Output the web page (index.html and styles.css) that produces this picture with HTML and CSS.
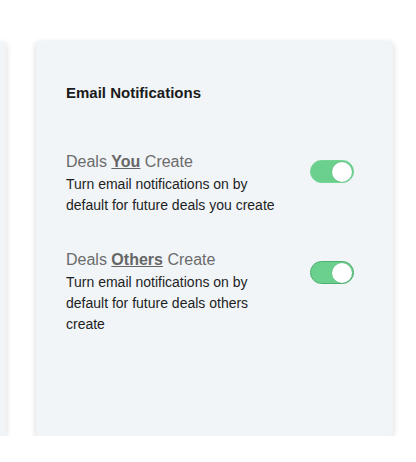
FILE: index.html
```html
<!DOCTYPE html>
<html>
<head>
<meta charset="utf-8">
<link rel="stylesheet" href="styles.css">
</head>
<body>
<div class="page">
  <div class="card card-side"></div>
  <div class="card card-main">
    <h2 class="heading">Email Notifications</h2>
    <div class="setting">
      <div class="setting-text">
        <div class="setting-title">Deals <span class="em">You</span> Create</div>
        <div class="setting-desc">Turn email notifications on by default for future deals you create</div>
      </div>
      <div class="toggle toggle-first"><span class="knob"></span></div>
    </div>
    <div class="setting setting-second">
      <div class="setting-text">
        <div class="setting-title">Deals <span class="em">Others</span> Create</div>
        <div class="setting-desc">Turn email notifications on by default for future deals others create</div>
      </div>
      <div class="toggle toggle-second toggle-focus"><span class="knob"></span></div>
    </div>
  </div>
</div>
</body>
</html>
```

FILE: styles.css
```css
html, body {
  margin: 0;
  padding: 0;
  background: #ffffff;
  font-family: "Liberation Sans", Arial, sans-serif;
}

.page {
  display: flex;
  gap: 30px;
  padding-top: 41px;
}

.card {
  background: #f1f5f8;
  box-shadow: 0 2px 6px rgba(0, 0, 0, 0.17);
  height: 395px;
  box-sizing: border-box;
}

.card-side {
  width: 6px;
  border-radius: 0 4px 4px 0;
}

.card-main {
  width: 357px;
  border-radius: 4px;
  padding: 43px 39px 0 30px;
}

.heading {
  margin: 0;
  font-size: 15px;
  line-height: 18px;
  font-weight: bold;
  color: #1b1b1b;
}

.setting {
  display: flex;
  justify-content: space-between;
  align-items: flex-start;
  margin-top: 48px;
}

.setting-second {
  margin-top: 32px;
}

.setting-text {
  width: 222px;
}

.setting-title {
  font-size: 16px;
  line-height: 23px;
  color: #6b6b6b;
  margin-bottom: 1px;
}

.em {
  font-weight: bold;
  text-decoration: underline;
  color: #666666;
}

.setting-desc {
  font-size: 14px;
  line-height: 21px;
  color: #1e1e1e;
}

.toggle {
  width: 44px;
  height: 23px;
  box-sizing: border-box;
  border-radius: 12px;
  background: #6bcf8d;
  border: 1px solid #74d493;
  display: flex;
  justify-content: flex-end;
  align-items: center;
  padding: 0 1px;
}

.toggle-first {
  margin-top: 10px;
}

.toggle-second {
  margin-top: 13px;
}

.toggle-focus {
  border-color: #4fb06e;
}

.knob {
  width: 20px;
  height: 20px;
  border-radius: 50%;
  background: #ffffff;
  box-shadow: 0 0 1px rgba(0, 0, 0, 0.25);
}
```
